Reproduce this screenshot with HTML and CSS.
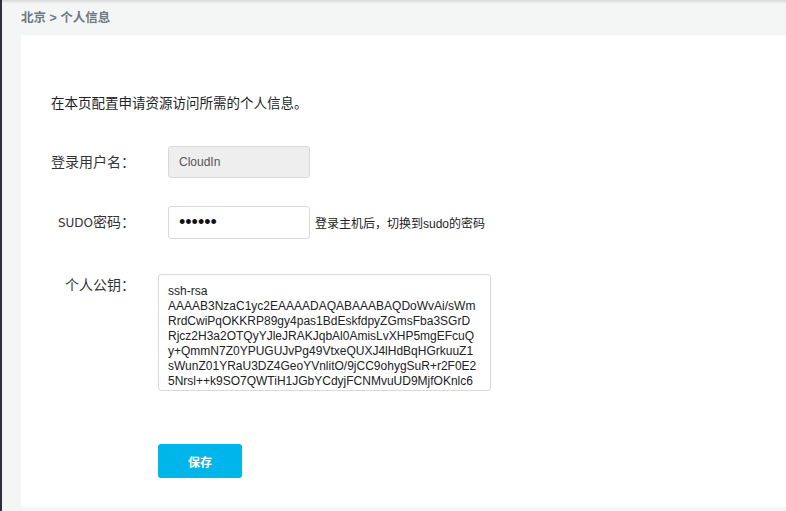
FILE: index.html
```html
<!DOCTYPE html>
<html lang="zh">
<head>
<meta charset="utf-8">
<title>个人信息</title>
<link rel="stylesheet" href="styles.css">
</head>
<body>
<div class="frame">
  <div class="crumb">北京 &gt; 个人信息</div>
  <div class="panel">
    <p class="intro">在本页配置申请资源访问所需的个人信息。</p>
    <div class="row row-user">
      <label class="label">登录用户名：</label>
      <div class="field"><div class="input input-disabled">CloudIn</div></div>
    </div>
    <div class="row row-sudo">
      <label class="label"><span class="latin">SUDO</span>密码：</label>
      <div class="field"><div class="input input-pass">••••••</div><span class="hint">登录主机后，切换到sudo的密码</span></div>
    </div>
    <div class="row row-key">
      <label class="label">个人公钥：</label>
      <div class="field field-key"><div class="textarea">ssh-rsa<br>AAAAB3NzaC1yc2EAAAADAQABAAABAQDoWvAi/sWm<br>RrdCwiPqOKKRP89gy4pas1BdEskfdpyZGmsFba3SGrD<br>Rjcz2H3a2OTQyYJleJRAKJqbAl0AmisLvXHP5mgEFcuQ<br>y+QmmN7Z0YPUGUJvPg49VtxeQUXJ4lHdBqHGrkuuZ1<br>sWunZ01YRaU3DZ4GeoYVnlitO/9jCC9ohygSuR+r2F0E2<br>5Nrsl++k9SO7QWTiH1JGbYCdyjFCNMvuUD9MjfOKnlc6</div></div>
    </div>
    <div class="actions">
      <button class="btn">保存</button>
    </div>
  </div>
</div>
</body>
</html>
```
FILE: styles.css
```css
html, body {
  margin: 0;
  padding: 0;
  height: 100%;
}
body {
  background: #f4f6f6;
  font-family: "Liberation Sans", "Noto Sans CJK SC", sans-serif;
  color: #333;
  overflow: hidden;
}
.frame {
  height: 511px;
  border-left: 2px solid #2e303b;
  box-shadow: inset 0 3px 2px -1px #d9dbdb;
  box-sizing: border-box;
}
.crumb {
  height: 35px;
  box-sizing: border-box;
  padding: 10px 0 0 19px;
  font-size: 12.5px;
  line-height: 17px;
  font-weight: bold;
  color: #6d7882;
}
.panel {
  margin-left: 19px;
  height: 472px;
  background: #fff;
  padding: 59px 0 0 30px;
  box-sizing: border-box;
}
.intro {
  margin: 0;
  font-size: 13.5px;
  line-height: 20px;
  color: #222;
}
.row {
  display: flex;
  align-items: center;
}
.row-user { margin-top: 32px; }
.row-sudo { margin-top: 28px; }
.row-key { margin-top: 35px; align-items: flex-start; }
.label {
  width: 84px;
  text-align: right;
  font-size: 14px;
  line-height: 20px;
  color: #333;
  flex-shrink: 0;
}
.latin {
  font-family: "DejaVu Sans", sans-serif;
  font-size: 12px;
}
.row-key .label { padding-top: 1px; }
.field {
  margin-left: 33px;
  display: flex;
  align-items: center;
}
.field-key { margin-left: 23px; }
.input {
  width: 142px;
  height: 32px;
  box-sizing: border-box;
  border: 1px solid #d9d9d9;
  border-radius: 3px;
  padding: 0 10px;
  font-size: 12px;
  line-height: 30px;
  color: #555;
}
.input-disabled {
  background: #eeeeee;
}
.input-pass {
  height: 33px;
  color: #111;
  font-size: 18px;
  background: #fff;
}
.hint {
  margin-left: 5px;
  font-size: 12px;
  color: #222;
}
.textarea {
  width: 333px;
  height: 117px;
  box-sizing: border-box;
  border: 1px solid #d9d9d9;
  border-radius: 3px;
  padding: 9px 0 0 9px;
  font-size: 12px;
  line-height: 15px;
  color: #222;
  overflow: hidden;
  white-space: nowrap;
}
.actions {
  margin-top: 53px;
  padding-left: 107px;
}
.btn {
  width: 84px;
  height: 34px;
  border: 0;
  border-radius: 3px;
  background: #00b5ea;
  color: #fff;
  font-family: "Liberation Sans", "Noto Sans CJK SC", sans-serif;
  font-size: 12px;
  font-weight: bold;
  padding: 0;
}
```
